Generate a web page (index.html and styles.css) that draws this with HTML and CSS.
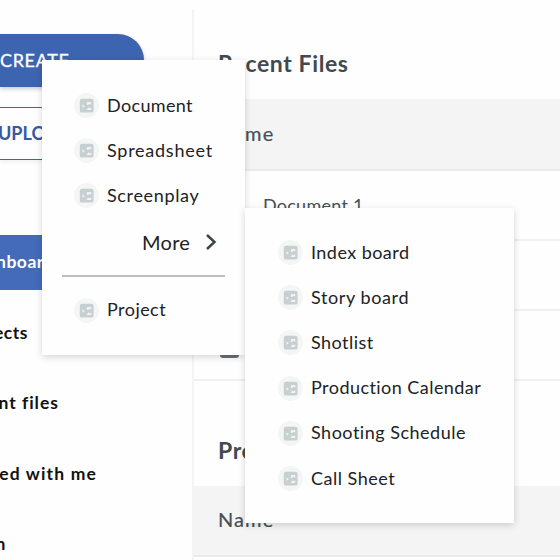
FILE: index.html
```html
<!DOCTYPE html>
<html lang="en">
<head>
<meta charset="utf-8">
<title>Dashboard</title>
<link rel="stylesheet" href="styles.css">
</head>
<body>
<svg class="defs" width="0" height="0" aria-hidden="true">
  <symbol id="doc" viewBox="0 0 25 25">
    <circle cx="12.5" cy="12.5" r="12.5" fill="#f4f5f5"/>
    <rect x="5.8" y="5.8" width="13.8" height="13.8" rx="2.2" fill="#c7cfd0"/>
    <path d="M8.3 11.5l2.7 1.6-2.5 1.7zM13 9h4.2v2.8l-1.5-1.1-1.5 1.3h-1.4zM12.3 17l2.2-2.4 1.3.6 1.4-1V17z" fill="#f0f3f3"/>
  </symbol>
</svg>
<div class="app">
  <aside class="sidebar">
    <div class="create"><span>CREATE</span></div>
    <div class="upload"><span>UPLOAD</span></div>
    <nav class="nav">
      <div class="nav-item active"><span class="w-dashboard">Dashboard</span></div>
      <div class="nav-item"><span class="w-projects">Projects</span></div>
      <div class="nav-item"><span class="w-recent">Recent files</span></div>
      <div class="nav-item"><span class="w-shared">Shared with me</span></div>
      <div class="nav-item"><span class="w-trash">Trash</span></div>
    </nav>
  </aside>
  <main class="main">
    <h2 class="recent-title">Recent Files</h2>
    <div class="head">Name</div>
    <div class="row"><i class="file"></i><span>Document 1</span></div>
    <div class="row"><i class="file"></i></div>
    <div class="row"><i class="file"></i></div>
    <h2 class="projects-title">Projects</h2>
    <div class="head projects-head">Name</div>
  </main>
</div>
<div class="menu">
  <div class="item"><svg><use href="#doc"/></svg><span class="t-document">Document</span></div>
  <div class="item"><svg><use href="#doc"/></svg><span class="t-spreadsheet">Spreadsheet</span></div>
  <div class="item"><svg><use href="#doc"/></svg><span class="t-screenplay">Screenplay</span></div>
  <div class="more"><span>More</span><svg class="chevron" viewBox="0 0 12 18"><path d="M2 2l7.5 7L2 16" fill="none" stroke="#3c464a" stroke-width="2.5"/></svg></div>
  <div class="divider"></div>
  <div class="item project"><svg><use href="#doc"/></svg><span class="t-project">Project</span></div>
</div>
<div class="submenu">
  <div class="item"><svg><use href="#doc"/></svg><span class="t-index">Index board</span></div>
  <div class="item"><svg><use href="#doc"/></svg><span class="t-story">Story board</span></div>
  <div class="item"><svg><use href="#doc"/></svg><span class="t-shotlist">Shotlist</span></div>
  <div class="item"><svg><use href="#doc"/></svg><span class="t-calendar">Production Calendar</span></div>
  <div class="item"><svg><use href="#doc"/></svg><span class="t-schedule">Shooting Schedule</span></div>
  <div class="item"><svg><use href="#doc"/></svg><span class="t-call">Call Sheet</span></div>
</div>
</body>
</html>
```

FILE: styles.css
```css
* { box-sizing: border-box; }
body { margin: 0; width: 560px; height: 560px; overflow: hidden; background: #fefefe; font-family: Lato, "Open Sans", sans-serif; position: relative; }
.defs { display: block; height: 0; }
.app { display: flex; height: 560px; overflow: hidden; }
.sidebar { width: 192px; flex: none; overflow: hidden; padding-top: 34px; }
.create { width: 144px; height: 53px; background: #3d64b1; color: #fff; border-radius: 0 26px 0 0; box-shadow: 0 2px 4px rgba(0,0,0,.2); font-size: 18px; line-height: 53px; letter-spacing: .65px; -webkit-text-stroke: .3px #fff; }
.upload { width: 144px; height: 53px; margin-top: 20px; border-top: 1px solid #3d64b1; border-bottom: 1px solid #3d64b1; color: #3558a5; font-size: 18px; font-weight: 700; line-height: 51px; box-shadow: 0 2px 4px rgba(0,0,0,.06); }
.upload span { margin-left: -2px; }
.nav { margin-top: 75px; }
.nav-item { height: 55px; margin-bottom: 15.2px; line-height: 53px; font-size: 17.5px; font-weight: 700; color: #111; letter-spacing: .5px; }
.nav-item:not(.active) { line-height: 55px; }
.nav-item span { display: flex; justify-content: flex-end; white-space: nowrap; }
.active { background: #446bba; color: #fff; }
.w-dashboard { width: 54px; }
.w-projects { width: 28px; }
.w-recent { width: 59px; letter-spacing: 1px; }
.w-shared { width: 97px; letter-spacing: 1.15px; }
.w-trash { width: 6px; }
.main { flex: 1; margin-top: 9px; border-left: 2px solid #f4f4f4; color: #465054; }
h2 { margin: 0; padding-left: 24px; font-size: 23px; line-height: 30px; font-weight: 700; color: #414b4f; letter-spacing: .6px; }
.recent-title { padding-top: 39px; height: 90px; }
.head { height: 72px; background: #f4f4f4; border-bottom: 2px solid #ebebeb; padding-left: 24px; line-height: 68px; font-size: 20px; letter-spacing: 1.1px; -webkit-text-stroke: .2px #465054; }
.projects-head { height: 71px; line-height: 67px; }
.row { height: 70px; display: flex; align-items: center; gap: 23px; border-bottom: 2px solid #f0f0f0; padding-left: 26px; font-size: 18px; letter-spacing: .25px; }
.row span { margin-top: -1px; margin-left: 1px; }
.file { width: 19px; height: 26px; border-radius: 3px; background: #667176; }
.projects-title { padding-top: 54px; height: 105px; }
.menu, .submenu { position: absolute; background: #fefefe; box-shadow: 0 2px 7px rgba(0,0,0,.17); color: #202224; }
.menu { left: 42px; top: 60px; width: 203px; height: 295px; padding-top: 23px; }
.submenu { left: 245px; top: 208px; width: 269px; height: 315px; padding-top: 22px; }
.item { height: 45.2px; display: flex; align-items: center; gap: 8px; padding-left: 32px; font-size: 18px; white-space: nowrap; letter-spacing: .45px; }
.item span { margin-top: -2px; }
.submenu .item { padding-left: 33px; }
.item svg { width: 25px; height: 25px; flex: none; }
.t-document { letter-spacing: .35px; }
.t-spreadsheet { letter-spacing: .75px; }
.t-screenplay { letter-spacing: .65px; }
.t-story { letter-spacing: .6px; }
.t-schedule { letter-spacing: .5px; }
.t-call { letter-spacing: .5px; }
.more { height: 48px; display: flex; align-items: center; padding-left: 100px; font-size: 20px; }
.more span { width: 63px; margin-top: -2px; letter-spacing: .3px; }
.chevron { width: 12px; height: 18px; margin-top: -1px; }
.divider { width: 163px; height: 2.5px; margin: 8px 0 0 20px; background: #bbbfbf; }
.project { margin-top: 10.5px; }
```
